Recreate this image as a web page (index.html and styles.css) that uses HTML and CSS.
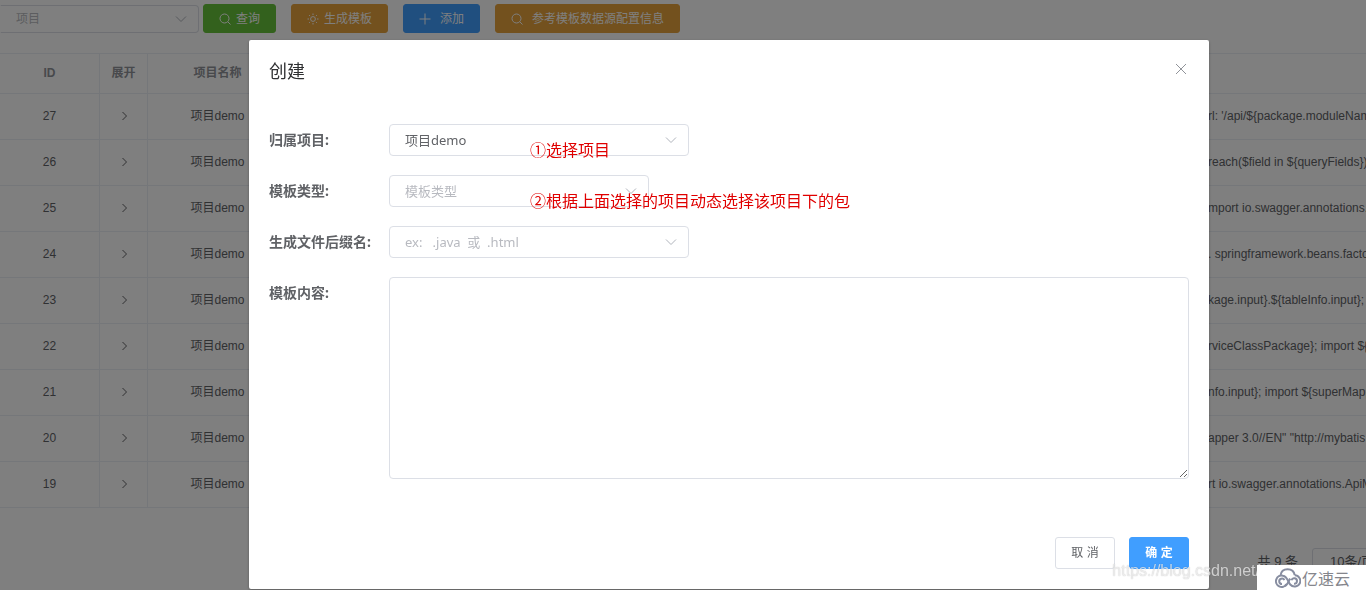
FILE: index.html
```html
<!DOCTYPE html>
<html lang="zh-CN">
<head>
<meta charset="utf-8">
<title>创建</title>
<link rel="stylesheet" href="styles.css">
</head>
<body>
<svg width="0" height="0" class="sprite" aria-hidden="true">
  <symbol id="down" viewBox="0 0 12 12"><path d="M1 3.500l5 5 5-5"/></symbol>
  <symbol id="right" viewBox="0 0 12 12"><path d="M4.500 2l4 4-4 4"/></symbol>
  <symbol id="search" viewBox="0 0 12 12"><circle cx="5.500" cy="5.500" r="4.500"/><path d="M8.800 8.800l2.700 2.700"/></symbol>
  <symbol id="plus" viewBox="0 0 12 12"><path d="M6 .5v11M.5 6h11"/></symbol>
  <symbol id="sun" viewBox="0 0 12 12"><circle cx="6" cy="6" r="2.400"/><path d="M6 .5v1.500M6 10v1.500M.5 6H2M10 6h1.500M2.100 2.100l1 1M8.900 8.900l1 1M2.100 9.900l1-1M8.900 3.100l1-1"/></symbol>
  <symbol id="close" viewBox="0 0 12 12"><path d="M1 1l10 10M11 1L1 11"/></symbol>
</svg>

<main class="page">
  <div class="toolbar">
    <div class="select select-filter">
      <select class="placeholder" aria-label="项目"><option>项目</option></select>
      <svg class="icon"><use href="#down"/></svg>
    </div>
    <div class="actions">
      <button class="btn success" type="button"><svg class="icon"><use href="#search"/></svg>查询</button>
      <button class="btn warning" type="button"><svg class="icon"><use href="#sun"/></svg>生成模板</button>
      <button class="btn primary wide" type="button"><svg class="icon"><use href="#plus"/></svg>添加</button>
      <button class="btn warning wide" type="button"><svg class="icon"><use href="#search"/></svg>参考模板数据源配置信息</button>
    </div>
  </div>

  <table class="grid">
    <colgroup><col class="col-id"><col class="col-expand"><col class="col-name"><col><col class="col-content"></colgroup>
    <thead><tr><th>ID</th><th>展开</th><th>项目名称</th><th></th><th></th></tr></thead>
    <tbody>
      <tr><td>27</td><td><svg class="icon"><use href="#right"/></svg></td><td>项目demo</td><td></td><td class="code">rl: '/api/${package.moduleName}</td></tr>
      <tr><td>26</td><td><svg class="icon"><use href="#right"/></svg></td><td>项目demo</td><td></td><td class="code">reach($field in ${queryFields})</td></tr>
      <tr><td>25</td><td><svg class="icon"><use href="#right"/></svg></td><td>项目demo</td><td></td><td class="code">mport io.swagger.annotations.</td></tr>
      <tr><td>24</td><td><svg class="icon"><use href="#right"/></svg></td><td>项目demo</td><td></td><td class="code">. springframework.beans.factory</td></tr>
      <tr><td>23</td><td><svg class="icon"><use href="#right"/></svg></td><td>项目demo</td><td></td><td class="code">kage.input}.${tableInfo.input};</td></tr>
      <tr><td>22</td><td><svg class="icon"><use href="#right"/></svg></td><td>项目demo</td><td></td><td class="code">rviceClassPackage}; import ${</td></tr>
      <tr><td>21</td><td><svg class="icon"><use href="#right"/></svg></td><td>项目demo</td><td></td><td class="code">nfo.input}; import ${superMapper</td></tr>
      <tr><td>20</td><td><svg class="icon"><use href="#right"/></svg></td><td>项目demo</td><td></td><td class="code">apper 3.0//EN" "http://mybatis.</td></tr>
      <tr><td>19</td><td><svg class="icon"><use href="#right"/></svg></td><td>项目demo</td><td></td><td class="code">rt io.swagger.annotations.ApiModel</td></tr>
    </tbody>
  </table>

  <div class="pager">
    <span>共 9 条</span>
    <select aria-label="每页条数"><option>10条/页</option></select>
  </div>
</main>

<div class="mask">
  <section class="dialog" role="dialog" aria-modal="true" aria-labelledby="dialog-title">
    <header class="dialog-head">
      <h1 id="dialog-title">创建</h1>
      <button class="close" type="button" aria-label="关闭"><svg class="icon"><use href="#close"/></svg></button>
    </header>
    <form class="form">
      <div class="item">
        <label for="project">归属项目:</label>
        <div class="select">
          <select id="project"><option>项目demo</option></select>
          <svg class="icon"><use href="#down"/></svg>
          <span class="note">①选择项目</span>
        </div>
      </div>
      <div class="item">
        <label for="type">模板类型:</label>
        <div class="select select-short">
          <select id="type" class="placeholder"><option>模板类型</option></select>
          <svg class="icon"><use href="#down"/></svg>
          <span class="note">②根据上面选择的项目动态选择该项目下的包</span>
        </div>
      </div>
      <div class="item">
        <label for="suffix">生成文件后缀名:</label>
        <div class="select">
          <select id="suffix" class="placeholder"><option>ex: &nbsp;&nbsp;.java &nbsp;或 &nbsp;.html</option></select>
          <svg class="icon"><use href="#down"/></svg>
        </div>
      </div>
      <div class="item">
        <label for="content">模板内容:</label>
        <textarea id="content"></textarea>
      </div>
    </form>
    <footer class="dialog-foot">
      <button class="btn plain" type="button">取 消</button>
      <button class="btn primary strong" type="button">确 定</button>
    </footer>
  </section>
</div>

<div class="watermark">https://blog.csdn.net/</div>
<div class="brand">
  <svg class="cloud" viewBox="0 0 26 20" aria-hidden="true">
    <path d="M5.500 7.500C6 3.500 9 1.200 12.600 1.200c3.800 0 6.600 2.400 7.100 6"/>
    <path d="M19.700 7.200a5.700 5.700 0 1 1-4.500 9.300C13 13.800 12.400 8.300 8 7.700A5.700 5.700 0 1 0 11.500 16.300"/>
    <path d="M7 16a2.700 2.700 0 1 1 2.400-3.800M16.500 12.200A2.800 2.800 0 1 1 19 15.800M10 18c3-1.500 3.500-4 5-7.500"/>
  </svg>
  <span>亿速云</span>
</div>
</body>
</html>
```
FILE: styles.css
```css
* { box-sizing: border-box; }

body {
  margin: 0;
  min-height: 100vh;
  overflow: hidden;
  background: #fff;
  color: #606266;
  font: 12px/20px "Liberation Sans", "Noto Sans CJK SC", sans-serif;
}

button, select, textarea { font: inherit; color: inherit; }

.sprite { position: absolute; }

.icon {
  width: 12px;
  height: 12px;
  flex: none;
  fill: none;
  stroke: currentColor;
  stroke-width: 1;
}

.page { padding-top: 4px; }

.toolbar { display: flex; align-items: center; gap: 4px; }
.actions { display: flex; gap: 15px; }

.btn {
  display: inline-flex;
  align-items: center;
  justify-content: center;
  gap: 5px;
  height: 29px;
  padding: 0 15px;
  border: 1px solid;
  border-radius: 3px;
  color: #fff;
  white-space: nowrap;
}
.wide { gap: 9px; }
.success { background: #67c23a; border-color: #67c23a; }
.warning { background: #e6a23c; border-color: #e6a23c; }
.primary { background: #409eff; border-color: #409eff; }
.plain { background: #fff; border-color: #dcdfe6; color: #606266; }
.strong { font-weight: 700; }

.select {
  position: relative;
  width: 300px;
  height: 32px;
  font: 13px/20px "Noto Sans", "Noto Sans CJK SC", sans-serif;
}
.select-short { width: 260px; }
.select-filter { width: 199px; height: 28px; font-size: 12px; }
.select select {
  width: 100%;
  height: 100%;
  padding: 0 30px 0 15px;
  border: 1px solid #dcdfe6;
  border-radius: 4px;
  background: #fff;
  appearance: none;
}
.select-filter select { border-left-color: #fff; border-radius: 0 4px 4px 0; }
.select .placeholder { color: #b8bac0; }
.select .icon {
  position: absolute;
  top: calc(50% - 6px);
  right: 12px;
  color: #b0b4bc;
  pointer-events: none;
}

.grid {
  width: 100%;
  margin-top: 20px;
  border-top: 1px solid #ebeef5;
  border-spacing: 0;
  table-layout: fixed;
}
.col-id { width: 100px; }
.col-expand { width: 48px; }
.col-name { width: 140px; }
.col-content { width: 168px; }
.grid th, .grid td {
  height: 46px;
  padding: 0 0 2px;
  border-bottom: 1px solid #ebeef5;
  text-align: center;
  white-space: nowrap;
}
.grid th { height: 40px; color: #909399; }
.grid th:nth-child(-n+3), .grid td:nth-child(-n+3) { border-right: 1px solid #ebeef5; }
.grid .icon { display: block; margin: 0 auto; }
.grid .code { padding-left: 10px; overflow: hidden; text-align: left; }

.pager {
  display: flex;
  justify-content: flex-end;
  align-items: center;
  gap: 14px;
  margin-top: 40px;
  font-size: 13px;
}
.pager select {
  width: 100px;
  height: 28px;
  margin-right: -46px;
  padding: 0 17px;
  border: 1px solid #dcdfe6;
  border-radius: 3px;
  background: #fff;
  appearance: none;
}

.mask {
  position: fixed;
  inset: 0;
  display: flex;
  justify-content: center;
  align-items: flex-start;
  padding: 40px 0 0 92px;
  background: rgba(0, 0, 0, .5);
}

.dialog {
  width: 960px;
  padding: 20px;
  border-radius: 2px;
  background: #fff;
  box-shadow: 0 1px 3px rgba(0, 0, 0, .3);
}
.dialog-head { display: flex; justify-content: space-between; align-items: flex-start; }
.dialog-head h1 {
  margin: 0;
  color: #303133;
  font-size: 18px;
  font-weight: 400;
  line-height: 24px;
}
.close { display: flex; margin-top: 3px; padding: 0 2px; border: 0; background: none; color: #909399; }

.form { display: grid; gap: 19px; margin-top: 40px; }
.item { display: flex; }
.item label {
  width: 120px;
  flex: none;
  font: bold 14px/32px "Noto Sans", "Noto Sans CJK SC", sans-serif;
}
.item textarea {
  flex: 1;
  height: 202px;
  padding: 5px 15px;
  border: 1px solid #dcdfe6;
  border-radius: 4px;
  resize: vertical;
}
.note {
  position: absolute;
  top: 14px;
  left: 141px;
  color: #e00000;
  font-size: 16px;
  line-height: 24px;
  white-space: nowrap;
}

.dialog-foot { display: flex; justify-content: flex-end; gap: 14px; margin-top: 58px; }
.dialog-foot .btn { height: 32px; min-width: 60px; }

.watermark {
  position: fixed;
  right: 106px;
  bottom: 7px;
  color: rgba(255, 255, 255, .7);
  font: 16px/24px "Liberation Sans", sans-serif;
  text-shadow: 0 0 1px rgba(0, 0, 0, .3);
}

.brand {
  position: fixed;
  right: 0;
  bottom: 0;
  display: flex;
  align-items: center;
  gap: 1px;
  width: 109px;
  height: 25px;
  padding-left: 18px;
  background: #fff;
  color: #85868c;
  font: 16px/24px "Noto Sans CJK SC", sans-serif;
}
.cloud { width: 26px; height: 20px; fill: none; stroke: #878da0; stroke-width: 2; }
```
